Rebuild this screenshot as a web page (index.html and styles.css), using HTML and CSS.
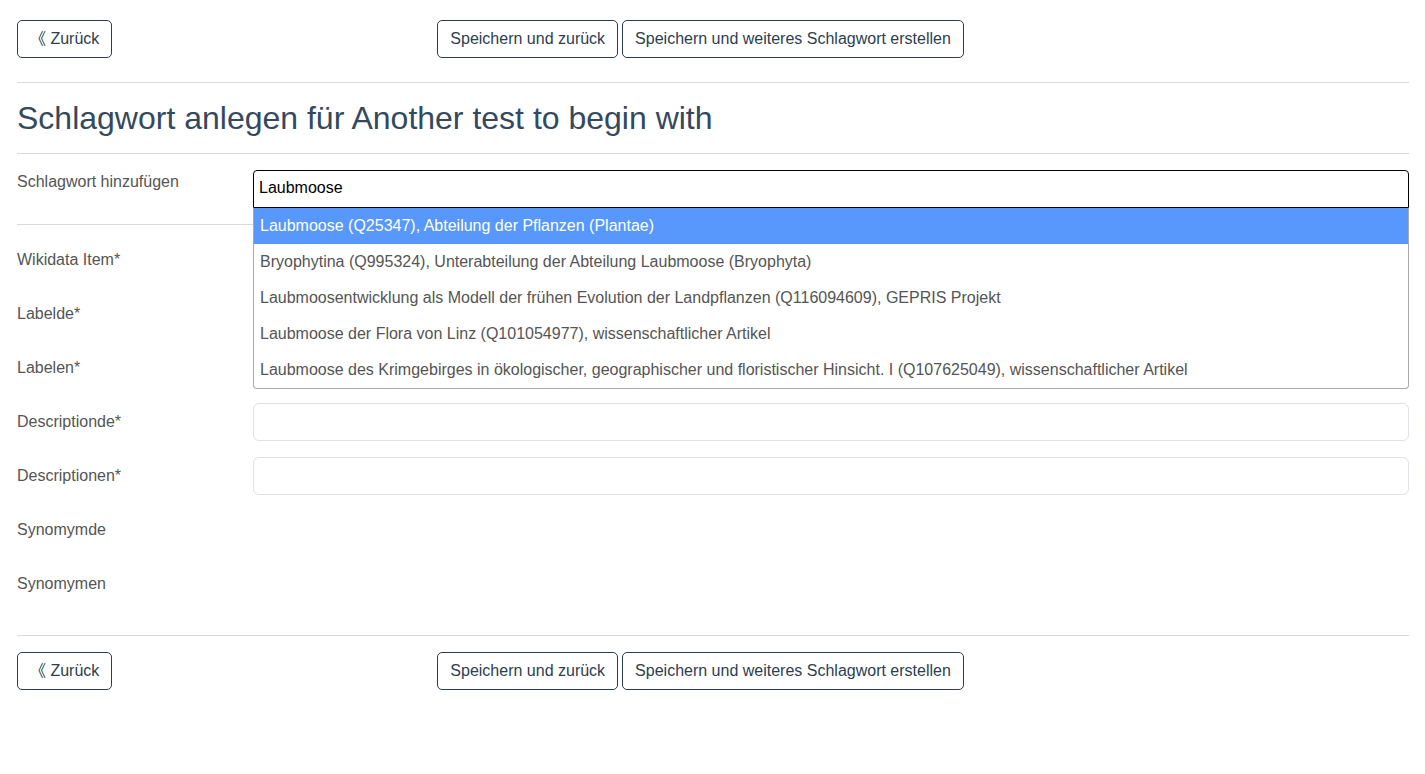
FILE: index.html
```html
<!DOCTYPE html>
<html lang="de">
<head>
<meta charset="utf-8">
<title>Schlagwort anlegen</title>
<link rel="stylesheet" href="styles.css">
</head>
<body>
<div class="container">
  <div class="actions">
    <button class="btn btn-back"><span class="chev">《</span> Zurück</button>
    <div class="save-group">
      <button class="btn">Speichern und zurück</button>
      <button class="btn">Speichern und weiteres Schlagwort erstellen</button>
    </div>
  </div>
  <hr class="sep">
  <h2 class="title">Schlagwort anlegen für Another test to begin with</h2>
  <hr class="sep">

  <div class="form-row first">
    <label class="label plain">Schlagwort hinzufügen</label>
    <div class="field search-field">
      <div class="search-input">Laubmoose</div>
      <ul class="dropdown">
        <li class="option highlighted">Laubmoose (Q25347), Abteilung der Pflanzen (Plantae)</li>
        <li class="option">Bryophytina (Q995324), Unterabteilung der Abteilung Laubmoose (Bryophyta)</li>
        <li class="option">Laubmoosentwicklung als Modell der frühen Evolution der Landpflanzen (Q116094609), GEPRIS Projekt</li>
        <li class="option">Laubmoose der Flora von Linz (Q101054977), wissenschaftlicher Artikel</li>
        <li class="option">Laubmoose des Krimgebirges in ökologischer, geographischer und floristischer Hinsicht. I (Q107625049), wissenschaftlicher Artikel</li>
      </ul>
    </div>
  </div>
  <hr class="sep">

  <div class="form-row">
    <label class="label">Wikidata Item*</label>
    <div class="field"><div class="input"></div></div>
  </div>
  <div class="form-row">
    <label class="label">Labelde*</label>
    <div class="field"><div class="input"></div></div>
  </div>
  <div class="form-row">
    <label class="label">Labelen*</label>
    <div class="field"><div class="input"></div></div>
  </div>
  <div class="form-row">
    <label class="label">Descriptionde*</label>
    <div class="field"><div class="input"></div></div>
  </div>
  <div class="form-row">
    <label class="label">Descriptionen*</label>
    <div class="field"><div class="input"></div></div>
  </div>
  <div class="form-row">
    <label class="label">Synomymde</label>
    <div class="field"><div class="input empty"></div></div>
  </div>
  <div class="form-row">
    <label class="label">Synomymen</label>
    <div class="field"><div class="input empty"></div></div>
  </div>

  <hr class="sep sep-bottom">
  <div class="actions">
    <button class="btn btn-back"><span class="chev">《</span> Zurück</button>
    <div class="save-group">
      <button class="btn">Speichern und zurück</button>
      <button class="btn">Speichern und weiteres Schlagwort erstellen</button>
    </div>
  </div>
</div>
</body>
</html>
```

FILE: styles.css
```css
* { box-sizing: border-box; }

html, body {
  margin: 0;
  padding: 0;
  background: #fff;
}

body {
  font-family: "Liberation Sans", Arial, sans-serif;
  font-size: 16px;
  line-height: 1.5;
  color: #555;
}

.container {
  padding: 20px 16px 0 17px;
}

.actions {
  display: flex;
  align-items: center;
  padding-bottom: 8px;
}

.save-group {
  display: flex;
  gap: 4px;
  margin-left: 325px;
}

.btn {
  font-family: "Liberation Sans", Arial, sans-serif;
  font-size: 16px;
  line-height: 24px;
  height: 38px;
  padding: 6px 12px;
  border: 1px solid #2c3e50;
  border-radius: 5px;
  background: #fff;
  color: #2c3e50;
  cursor: pointer;
  white-space: nowrap;
}

.chev {
  font-family: "Noto Sans CJK SC", "Noto Sans CJK JP", sans-serif;
  color: #2c3e50;
  display: inline-block;
  width: 16px;
  line-height: 16px;
  text-align: right;
}

.sep {
  border: 0;
  border-top: 1px solid #dadada;
  margin: 16px 0;
  height: 0;
}

.sep-bottom {
  margin-top: 32px;
}

.title {
  font-size: 32px;
  font-weight: 400;
  line-height: 1.2;
  color: #34495e;
  margin: 0;
}

.form-row {
  display: flex;
  margin-bottom: 16px;
}

.form-row.first {
  margin-bottom: 0;
}

.label {
  width: 236px;
  flex: none;
  padding-top: 7px;
  color: #555;
}

.label.plain {
  padding-top: 0;
}

.field {
  flex: 1;
  position: relative;
}

.input {
  height: 38px;
  border: 1px solid #dee2e6;
  border-radius: 6px;
  background: #fff;
}

.input.empty {
  border-color: transparent;
}

.search-input {
  height: 38px;
  border: 1px solid #000;
  border-radius: 4px 4px 0 0;
  padding: 5px 5px 7px;
  color: #000;
  background: #fff;
}

.dropdown {
  position: absolute;
  left: 0;
  right: 0;
  top: 38px;
  margin: 0;
  padding: 0;
  list-style: none;
  background: #fff;
  border: 1px solid #aaa;
  border-top: 0;
  border-radius: 0 0 4px 4px;
  z-index: 10;
}

.option {
  padding: 6px 6px;
  height: 36px;
  color: #555;
  white-space: nowrap;
}

.option.highlighted {
  background: #5897fb;
  color: #fff;
}
```
